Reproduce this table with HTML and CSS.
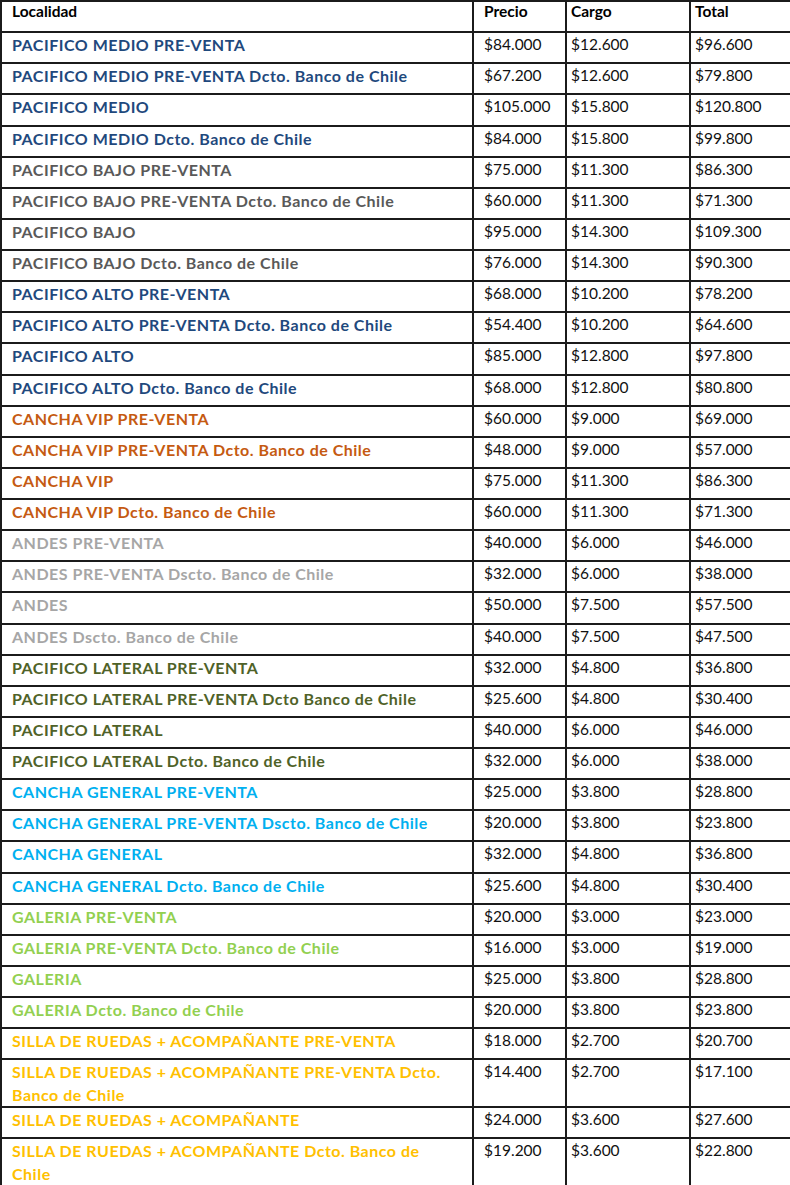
FILE: index.html
```html
<!DOCTYPE html>
<html lang="es">
<head>
<meta charset="utf-8">
<title>Precios</title>
<link rel="stylesheet" href="styles.css">
</head>
<body>
<table class="prices">
  <colgroup>
    <col class="c-loc"><col class="c-pre"><col class="c-car"><col class="c-tot">
  </colgroup>
  <thead>
    <tr><th class="loc">Localidad</th><th class="pre">Precio</th><th class="car">Cargo</th><th class="tot">Total</th></tr>
  </thead>
  <tbody>
    <tr class="blue"><td class="loc">PACIFICO MEDIO PRE-VENTA</td><td class="pre">$84.000</td><td class="car">$12.600</td><td class="tot">$96.600</td></tr>
    <tr class="blue"><td class="loc">PACIFICO MEDIO PRE-VENTA Dcto. Banco de Chile</td><td class="pre">$67.200</td><td class="car">$12.600</td><td class="tot">$79.800</td></tr>
    <tr class="blue"><td class="loc">PACIFICO MEDIO</td><td class="pre">$105.000</td><td class="car">$15.800</td><td class="tot">$120.800</td></tr>
    <tr class="blue"><td class="loc">PACIFICO MEDIO Dcto. Banco de Chile</td><td class="pre">$84.000</td><td class="car">$15.800</td><td class="tot">$99.800</td></tr>
    <tr class="gray"><td class="loc">PACIFICO BAJO PRE-VENTA</td><td class="pre">$75.000</td><td class="car">$11.300</td><td class="tot">$86.300</td></tr>
    <tr class="gray"><td class="loc">PACIFICO BAJO PRE-VENTA Dcto. Banco de Chile</td><td class="pre">$60.000</td><td class="car">$11.300</td><td class="tot">$71.300</td></tr>
    <tr class="gray"><td class="loc">PACIFICO BAJO</td><td class="pre">$95.000</td><td class="car">$14.300</td><td class="tot">$109.300</td></tr>
    <tr class="gray"><td class="loc">PACIFICO BAJO Dcto. Banco de Chile</td><td class="pre">$76.000</td><td class="car">$14.300</td><td class="tot">$90.300</td></tr>
    <tr class="blue"><td class="loc">PACIFICO ALTO PRE-VENTA</td><td class="pre">$68.000</td><td class="car">$10.200</td><td class="tot">$78.200</td></tr>
    <tr class="blue"><td class="loc">PACIFICO ALTO PRE-VENTA Dcto. Banco de Chile</td><td class="pre">$54.400</td><td class="car">$10.200</td><td class="tot">$64.600</td></tr>
    <tr class="blue"><td class="loc">PACIFICO ALTO</td><td class="pre">$85.000</td><td class="car">$12.800</td><td class="tot">$97.800</td></tr>
    <tr class="blue"><td class="loc">PACIFICO ALTO Dcto. Banco de Chile</td><td class="pre">$68.000</td><td class="car">$12.800</td><td class="tot">$80.800</td></tr>
    <tr class="orange"><td class="loc">CANCHA VIP PRE-VENTA</td><td class="pre">$60.000</td><td class="car">$9.000</td><td class="tot">$69.000</td></tr>
    <tr class="orange"><td class="loc">CANCHA VIP PRE-VENTA Dcto. Banco de Chile</td><td class="pre">$48.000</td><td class="car">$9.000</td><td class="tot">$57.000</td></tr>
    <tr class="orange"><td class="loc">CANCHA VIP</td><td class="pre">$75.000</td><td class="car">$11.300</td><td class="tot">$86.300</td></tr>
    <tr class="orange"><td class="loc">CANCHA VIP Dcto. Banco de Chile</td><td class="pre">$60.000</td><td class="car">$11.300</td><td class="tot">$71.300</td></tr>
    <tr class="silver"><td class="loc">ANDES PRE-VENTA</td><td class="pre">$40.000</td><td class="car">$6.000</td><td class="tot">$46.000</td></tr>
    <tr class="silver"><td class="loc">ANDES PRE-VENTA Dscto. Banco de Chile</td><td class="pre">$32.000</td><td class="car">$6.000</td><td class="tot">$38.000</td></tr>
    <tr class="silver"><td class="loc">ANDES</td><td class="pre">$50.000</td><td class="car">$7.500</td><td class="tot">$57.500</td></tr>
    <tr class="silver"><td class="loc">ANDES Dscto. Banco de Chile</td><td class="pre">$40.000</td><td class="car">$7.500</td><td class="tot">$47.500</td></tr>
    <tr class="olive"><td class="loc">PACIFICO LATERAL PRE-VENTA</td><td class="pre">$32.000</td><td class="car">$4.800</td><td class="tot">$36.800</td></tr>
    <tr class="olive"><td class="loc">PACIFICO LATERAL PRE-VENTA Dcto Banco de Chile</td><td class="pre">$25.600</td><td class="car">$4.800</td><td class="tot">$30.400</td></tr>
    <tr class="olive"><td class="loc">PACIFICO LATERAL</td><td class="pre">$40.000</td><td class="car">$6.000</td><td class="tot">$46.000</td></tr>
    <tr class="olive"><td class="loc">PACIFICO LATERAL Dcto. Banco de Chile</td><td class="pre">$32.000</td><td class="car">$6.000</td><td class="tot">$38.000</td></tr>
    <tr class="sky"><td class="loc">CANCHA GENERAL PRE-VENTA</td><td class="pre">$25.000</td><td class="car">$3.800</td><td class="tot">$28.800</td></tr>
    <tr class="sky"><td class="loc">CANCHA GENERAL PRE-VENTA Dscto. Banco de Chile</td><td class="pre">$20.000</td><td class="car">$3.800</td><td class="tot">$23.800</td></tr>
    <tr class="sky"><td class="loc">CANCHA GENERAL</td><td class="pre">$32.000</td><td class="car">$4.800</td><td class="tot">$36.800</td></tr>
    <tr class="sky"><td class="loc">CANCHA GENERAL Dcto. Banco de Chile</td><td class="pre">$25.600</td><td class="car">$4.800</td><td class="tot">$30.400</td></tr>
    <tr class="lime"><td class="loc">GALERIA PRE-VENTA</td><td class="pre">$20.000</td><td class="car">$3.000</td><td class="tot">$23.000</td></tr>
    <tr class="lime"><td class="loc">GALERIA PRE-VENTA Dcto. Banco de Chile</td><td class="pre">$16.000</td><td class="car">$3.000</td><td class="tot">$19.000</td></tr>
    <tr class="lime"><td class="loc">GALERIA</td><td class="pre">$25.000</td><td class="car">$3.800</td><td class="tot">$28.800</td></tr>
    <tr class="lime"><td class="loc">GALERIA Dcto. Banco de Chile</td><td class="pre">$20.000</td><td class="car">$3.800</td><td class="tot">$23.800</td></tr>
    <tr class="gold"><td class="loc">SILLA DE RUEDAS + ACOMPAÑANTE PRE-VENTA</td><td class="pre">$18.000</td><td class="car">$2.700</td><td class="tot">$20.700</td></tr>
    <tr class="gold"><td class="loc">SILLA DE RUEDAS + ACOMPAÑANTE PRE-VENTA Dcto. Banco de Chile</td><td class="pre">$14.400</td><td class="car">$2.700</td><td class="tot">$17.100</td></tr>
    <tr class="gold"><td class="loc">SILLA DE RUEDAS + ACOMPAÑANTE</td><td class="pre">$24.000</td><td class="car">$3.600</td><td class="tot">$27.600</td></tr>
    <tr class="gold"><td class="loc">SILLA DE RUEDAS + ACOMPAÑANTE Dcto. Banco de Chile</td><td class="pre">$19.200</td><td class="car">$3.600</td><td class="tot">$22.800</td></tr>
  </tbody>
</table>
</body>
</html>
```

FILE: styles.css
```css
html, body {
  margin: 0;
  padding: 0;
  background: #ffffff;
}

body {
  font-family: "Lato", "Liberation Sans", sans-serif;
  font-size: 15.5px;
  color: #111;
}

.prices {
  border-collapse: collapse;
  table-layout: fixed;
  width: 800px;
}

.c-loc { width: 472px; }
.c-pre { width: 93px; }
.c-car { width: 124px; }
.c-tot { width: 111px; }

.prices th,
.prices td {
  border: 2px solid #1b1b1b;
  text-align: left;
  vertical-align: top;
  line-height: 23px;
  padding: 0 4px 0 4px;
  font-weight: 400;
}

.prices tr {
  height: 31.125px;
}

.prices th {
  font-weight: 700;
  color: #000;
  line-height: 19px;
}

.prices td.loc {
  font-weight: 700;
  font-size: 16px;
  letter-spacing: 0.5px;
}

.prices .loc { padding-left: 10px; padding-right: 30px; }
.prices .pre { padding-left: 10px; }
.prices .car { padding-left: 4px; }
.prices .tot { padding-left: 4px; }

.prices td.pre,
.prices td.car,
.prices td.tot {
  color: #111;
}

.blue td.loc { color: #1f497d; }
.gray td.loc { color: #595959; }
.orange td.loc { color: #c55a11; }
.silver td.loc { color: #a6a6a6; }
.olive td.loc { color: #4f6228; }
.sky td.loc { color: #00b0f0; }
.lime td.loc { color: #92d050; }
.gold td.loc { color: #ffc000; }
```
